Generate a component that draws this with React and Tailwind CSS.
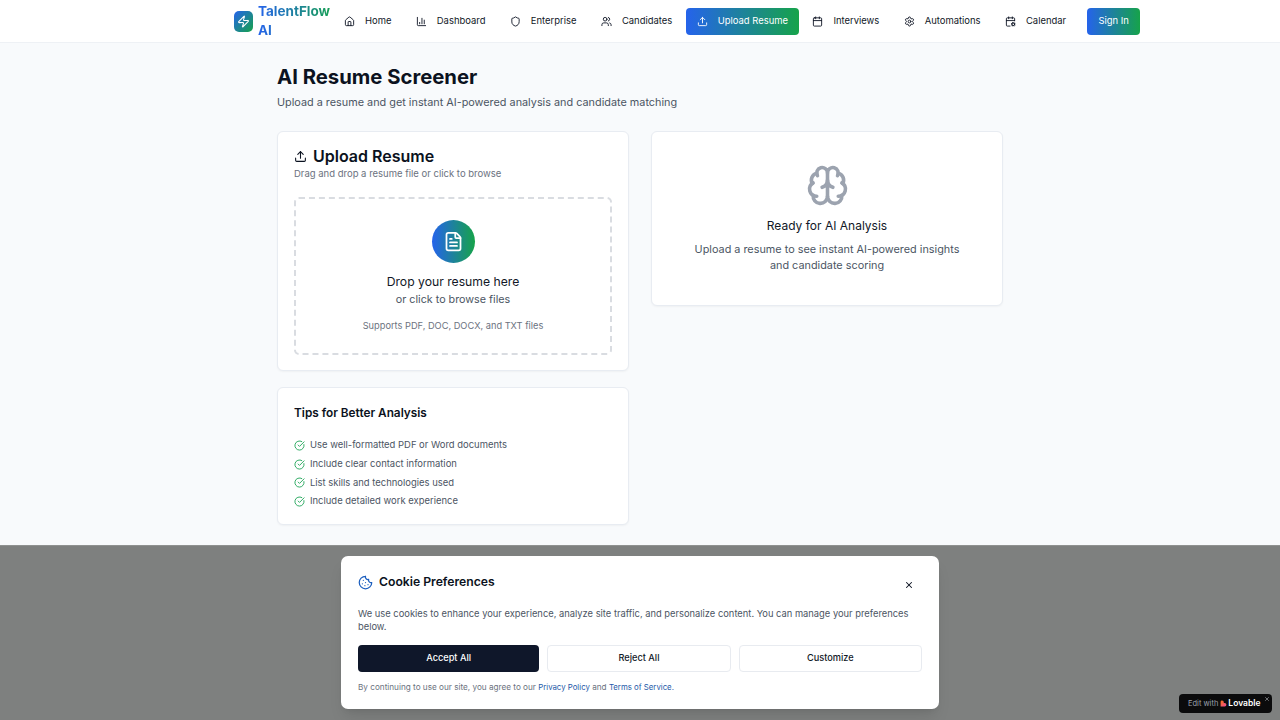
import React from "react";
import {
  Home,
  ChartColumn,
  Shield,
  Users,
  Upload,
  Calendar,
  Settings,
  CalendarCog,
  Zap,
  FileText,
  Brain,
  CircleCheckBig,
  Cookie,
  X,
} from "lucide-react";

const navItems = [
  { label: "Home", icon: Home },
  { label: "Dashboard", icon: ChartColumn },
  { label: "Enterprise", icon: Shield },
  { label: "Candidates", icon: Users },
  { label: "Upload Resume", icon: Upload, active: true },
  { label: "Interviews", icon: Calendar },
  { label: "Automations", icon: Settings },
  { label: "Calendar", icon: CalendarCog },
];

const tips = [
  "Use well-formatted PDF or Word documents",
  "Include clear contact information",
  "List skills and technologies used",
  "Include detailed work experience",
];

function Header() {
  return (
    <header className="h-[43px] shrink-0 bg-white border-b border-[#eef1f5] flex items-center pl-[234px]">
      <div className="flex items-center w-[103px] gap-[5px]">
        <div className="w-[19px] h-[21px] shrink-0 rounded-[5px] bg-linear-to-br/srgb from-[#2563eb] to-[#16a34a] flex items-center justify-center">
          <Zap className="w-[13px] h-[13px] text-white" strokeWidth={2} />
        </div>
        <div className="w-[78px] text-[13.5px] leading-[19px] font-bold bg-linear-to-r/srgb from-[#2563eb] to-[#16a34a] bg-clip-text text-transparent">
          TalentFlow AI
        </div>
      </div>
      <nav className="flex items-center ml-[-4px] gap-[2.36px]">
        {navItems.map((item) => {
          const Icon = item.icon;
          return (
            <div
              key={item.label}
              className={`h-[27px] px-[11px] rounded-[4px] flex items-center gap-[10px] text-[9.45px] ${
                item.active
                  ? "text-white bg-linear-to-r/srgb from-[#2563eb] to-[#16a34a]"
                  : "text-[#111827]"
              }`}
            >
              <Icon className="w-[11px] h-[11px]" strokeWidth={2} />
              <span>{item.label}</span>
            </div>
          );
        })}
      </nav>
      <button className="ml-[10px] w-[53px] h-[27px] rounded-[4px] text-[9.45px] text-white bg-linear-to-r/srgb from-[#2563eb] to-[#16a34a]">
        Sign In
      </button>
    </header>
  );
}

function UploadCard() {
  return (
    <div className="h-[240px] bg-white border border-[#e8ecf2] rounded-[6px] shadow-[0_1px_2px_rgba(0,0,0,0.04)] px-[16px] pt-[14px]">
      <div className="flex items-center gap-[6px]">
        <Upload className="w-[13px] h-[13px] text-[#0b1220]" strokeWidth={2} />
        <h2 className="text-[16px] leading-[20px] font-semibold text-[#0b1220]">
          Upload Resume
        </h2>
      </div>
      <p className="text-[9.5px] leading-[16px] text-[#6b7280]">
        Drag and drop a resume file or click to browse
      </p>
      <div className="mt-[15px] h-[158px] border-2 border-dashed border-[#d9dce1] rounded-[5px] flex flex-col items-center pt-[21px]">
        <div className="w-[43px] h-[43px] rounded-full bg-linear-to-r/srgb from-[#2563eb] to-[#16a34a] flex items-center justify-center">
          <FileText className="w-[21px] h-[21px] text-white" strokeWidth={2} />
        </div>
        <p className="mt-[10px] text-[12.2px] leading-[18px] text-[#111827]">
          Drop your resume here
        </p>
        <p className="text-[10.75px] leading-[18px] text-[#4b5563]">
          or click to browse files
        </p>
        <p className="mt-[9px] text-[9.25px] leading-[16px] text-[#6b7280]">
          Supports PDF, DOC, DOCX, and TXT files
        </p>
      </div>
    </div>
  );
}

function TipsCard() {
  return (
    <div className="h-[138px] bg-white border border-[#e8ecf2] rounded-[6px] shadow-[0_1px_2px_rgba(0,0,0,0.04)] px-[16px] pt-[16px]">
      <h3 className="text-[11.8px] leading-[18px] font-semibold text-[#0b1220]">
        Tips for Better Analysis
      </h3>
      <ul className="mt-[15px] flex flex-col gap-[1.67px]">
        {tips.map((tip) => (
          <li
            key={tip}
            className="h-[17px] flex items-center gap-[5px] text-[9.45px] text-[#4b5563]"
          >
            <CircleCheckBig className="w-[11px] h-[11px] text-[#22a55a]" strokeWidth={2} />
            <span>{tip}</span>
          </li>
        ))}
      </ul>
    </div>
  );
}

function ReadyCard() {
  return (
    <div className="h-[175px] bg-white border border-[#e8ecf2] rounded-[6px] shadow-[0_1px_2px_rgba(0,0,0,0.04)] flex flex-col items-center pt-[32px] text-center">
      <Brain className="w-[43px] h-[43px] text-[#9ca3af]" strokeWidth={2} />
      <h3 className="mt-[10px] text-[12px] leading-[18px] text-[#111827]">
        Ready for AI Analysis
      </h3>
      <p className="mt-[6px] w-[270px] text-[10.85px] leading-[16px] text-[#4b5563]">
        Upload a resume to see instant AI-powered insights and candidate scoring
      </p>
    </div>
  );
}

function CookieBanner() {
  return (
    <div className="flex-1 bg-[#7e807f] flex justify-center pt-[10px] border-t border-[#8f9190]">
      <div className="w-[598px] h-[153px] bg-white rounded-[7px] shadow-lg px-[17px] pt-[17px]">
        <div className="flex items-center justify-between">
          <div className="flex items-center gap-[6px]">
            <Cookie className="w-[15px] h-[15px] text-[#1d5fbf]" strokeWidth={2} />
            <h3 className="text-[12.2px] leading-[18px] font-semibold text-[#0b1220]">
              Cookie Preferences
            </h3>
          </div>
          <X className="w-[10px] h-[10px] mt-[6px] mr-[8px] text-[#0b1220]" strokeWidth={2.5} />
        </div>
        <p className="mt-[16px] text-[9.35px] leading-[13px] text-[#4b5563]">
          We use cookies to enhance your experience, analyze site traffic, and personalize content. You can manage your preferences below.
        </p>
        <div className="mt-[11.5px] flex gap-[8px]">
          <button className="flex-1 h-[27px] rounded-[4px] bg-[#0f172a] text-white text-[9.2px] font-medium">
            Accept All
          </button>
          <button className="flex-1 h-[27px] rounded-[4px] bg-white border border-[#e8ebf0] text-[#111827] text-[9.2px] font-medium">
            Reject All
          </button>
          <button className="flex-1 h-[27px] rounded-[4px] bg-white border border-[#e8ebf0] text-[#111827] text-[9.2px] font-medium">
            Customize
          </button>
        </div>
        <p className="mt-[8.5px] text-[8.18px] leading-[14px] text-[#6b7280]">
          By continuing to use our site, you agree to our{" "}
          <span className="text-[7.8px] text-[#2559a8]">Privacy Policy</span> and{" "}
          <span className="text-[7.8px] text-[#2559a8]">Terms of Service.</span>
        </p>
      </div>
    </div>
  );
}

function LovableBadge() {
  return (
    <div className="absolute right-[8px] bottom-[7px] w-[93px] h-[19px] rounded-[4px] bg-[#0b0b0c] flex items-center pl-[9px] text-[7.5px] text-[#9ca3af]">
      <span>Edit with</span>
      <svg className="ml-[2px] w-[7px] h-[7px]" viewBox="0 0 24 24">
        <defs>
          <linearGradient id="lovable" x1="0" y1="0" x2="1" y2="1">
            <stop offset="0" stopColor="#f97316" />
            <stop offset="1" stopColor="#ec4899" />
          </linearGradient>
        </defs>
        <path
          fill="url(#lovable)"
          d="M7 2a6 6 0 0 1 6 6v2h3a6 6 0 0 1 0 12H2V7a5 5 0 0 1 5-5z"
        />
      </svg>
      <span className="ml-[1px] text-white font-semibold text-[8.5px]">Lovable</span>
      <X className="absolute right-[2px] top-[2px] w-[6px] h-[6px] text-[#d1d5db]" strokeWidth={2} />
    </div>
  );
}

export default function App() {
  return (
    <div className="relative h-screen overflow-hidden flex flex-col bg-[#f8fafc] font-['Inter',sans-serif]">
      <Header />
      <main className="h-[502px] shrink-0 pl-[277px] pt-[21px]">
        <h1 className="text-[20.3px] leading-[26px] font-bold text-[#0b1220]">
          AI Resume Screener
        </h1>
        <p className="mt-[3px] text-[10.85px] leading-[18px] text-[#4b5563]">
          Upload a resume and get instant AI-powered analysis and candidate matching
        </p>
        <div className="mt-[20px] flex gap-[22px] items-start">
          <div className="w-[352px] flex flex-col gap-[16px]">
            <UploadCard />
            <TipsCard />
          </div>
          <div className="w-[352px]">
            <ReadyCard />
          </div>
        </div>
      </main>
      <CookieBanner />
      <LovableBadge />
    </div>
  );
}
